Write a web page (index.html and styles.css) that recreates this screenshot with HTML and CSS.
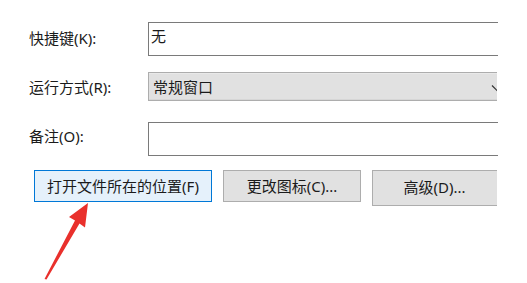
FILE: index.html
```html
<!DOCTYPE html>
<html lang="zh-CN">

<head>
  <meta charset="UTF-8">
  <meta name="viewport" content="width=device-width, initial-scale=1.0">
  <title>属性 - 快捷方式</title>
  <link rel="stylesheet" href="styles.css">
</head>

<body>
  <div class="panel">
    <div class="row row-key">
      <label class="field-label">快捷键(K):</label>
      <div class="text-box">无</div>
    </div>

    <div class="row row-run">
      <label class="field-label">运行方式(R):</label>
      <div class="combo-box">
        <span>常规窗口</span>
        <svg class="combo-arrow" width="12" height="8" viewBox="0 0 12 8">
          <path d="M1 1.5 L6 6.5 L11 1.5" fill="none" stroke="#333" stroke-width="1.2" />
        </svg>
      </div>
    </div>

    <div class="row row-note">
      <label class="field-label">备注(O):</label>
      <div class="text-box"></div>
    </div>

    <div class="button-row">
      <button class="btn btn-focus">打开文件所在的位置(F)</button>
      <button class="btn btn-icon">更改图标(C)...</button>
      <button class="btn btn-adv">高级(D)...</button>
    </div>
  </div>

  <!-- red pointer arrow -->
  <svg class="pointer" width="60" height="92" viewBox="0 0 60 92">
    <polygon points="6.5,89 37,30.5 31,27 50,13 47,37.5 41.5,33.5 8.5,89.5" fill="#e9302c" />
  </svg>
</body>

</html>
```

FILE: styles.css
```css
body {
  margin: 0;
  padding: 0;
  background-color: #fff;
  font-family: "Noto Sans", "Noto Sans CJK SC", sans-serif;
  font-size: 15px;
  color: #1b1b1b;
  width: 527px;
  height: 283px;
  overflow: hidden;
  position: relative;
}

.panel {
  padding: 22px 0 0 29px;
}

.row {
  display: flex;
  align-items: center;
}

.field-label {
  width: 119px;
  line-height: 20px;
}

/* boxes are cut at the right edge of the screenshot, so no right border */
.text-box {
  width: 347px;
  height: 32px;
  border: 1px solid #7a7a7a;
  border-right: none;
  background: #fff;
  padding: 0 0 0 2px;
  line-height: 26px;
  box-sizing: content-box;
}

.row-key .field-label {
  margin-top: -2px;
}

.row-run {
  margin-top: 16px;
}

.row-note {
  margin-top: 21px;
}

.row-note .field-label {
  margin-top: -6px;
}

.combo-box {
  width: 344px;
  height: 27px;
  border: 1px solid #adadad;
  border-right: none;
  background: #e1e1e1;
  box-shadow: inset 0 1px 0 #e9e9e9, inset 0 -1px 0 #d6d6d6;
  padding-left: 4px;
  display: flex;
  align-items: center;
  justify-content: space-between;
  overflow: hidden;
  box-sizing: content-box;
}

.combo-box span {
  line-height: 20px;
}

.combo-arrow {
  flex-shrink: 0;
  margin-right: -6px;
  margin-top: 2px;
}

.button-row {
  display: flex;
  align-items: flex-start;
  gap: 11px;
  margin-top: 14px;
  padding-left: 5px;
}

.btn {
  font-family: inherit;
  font-size: 15px;
  color: #1b1b1b;
  background: #e1e1e1;
  border: 1px solid #adadad;
  padding: 0;
  height: 32px;
  line-height: 20px;
  cursor: pointer;
}

.btn-focus {
  width: 178px;
  background: #e5f1fb;
  border-color: #0078d7;
}

.btn-icon {
  width: 138px;
}

.btn-adv {
  width: 125px;
  height: 36px;
  padding: 0 1px 3px 0;
  border-right: none;
}

.pointer {
  position: absolute;
  left: 38px;
  top: 190px;
}
```
